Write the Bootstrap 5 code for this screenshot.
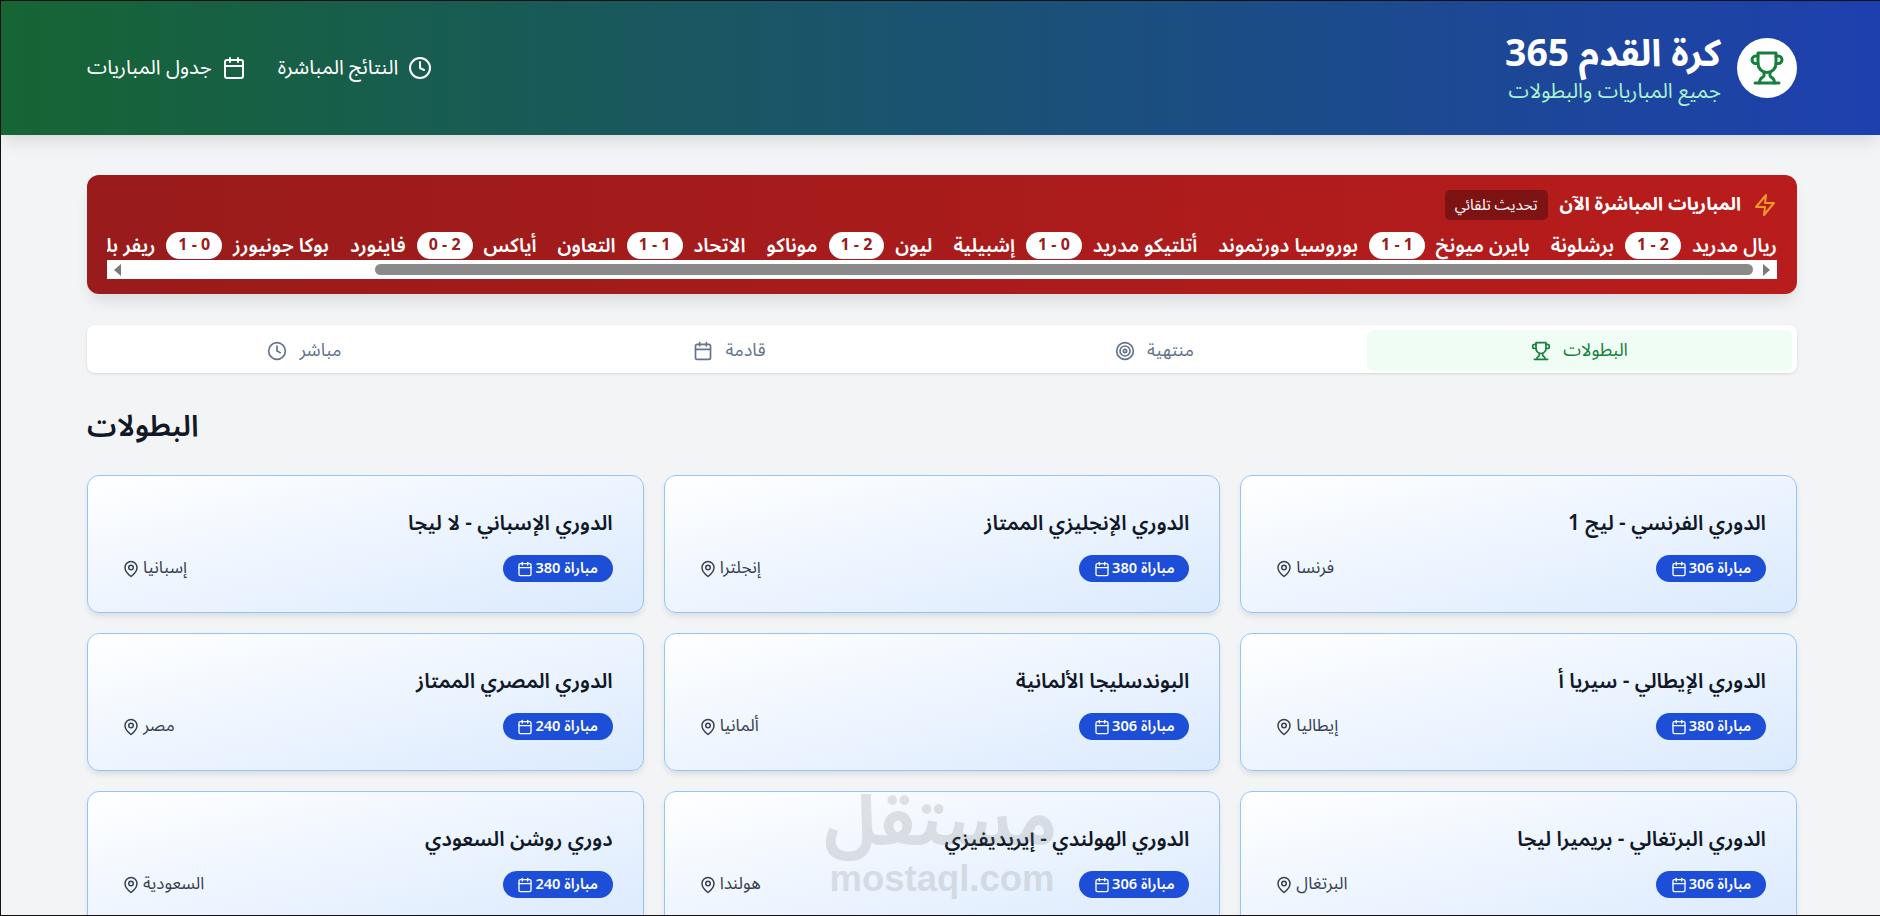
<!DOCTYPE html>
<html lang="ar" dir="rtl">
<head>
<meta charset="utf-8">
<link href="https://cdn.jsdelivr.net/npm/bootstrap@5.3.0/dist/css/bootstrap.min.css" rel="stylesheet">
<style>
html,body{height:100%;overflow:hidden}
body{font-family:"Noto Sans Arabic","Noto Sans","Open Sans","DejaVu Sans",sans-serif;background:#f3f4f6;color:#111827;border:1px solid #111;border-right:0;position:relative}
svg.ic{fill:none;stroke:currentColor;stroke-width:2;stroke-linecap:round;stroke-linejoin:round;flex:none}
.hero{height:134px;background:linear-gradient(to left,#1e40af,#166534);box-shadow:0 10px 15px -3px rgba(0,0,0,.1);padding:0 83px 0 86px;color:#fff}
.logo-disc{width:60px;height:60px;background:#fff;color:#15803d}
.brand-block{padding-top:4px}
.brand-title{font-size:37.3px;line-height:40px;font-weight:700}
.brand-sub{font-size:20.7px;line-height:28px;color:#a7f3d0;margin-top:3px}
.hero-nav{gap:32px}
.hero-link{font-size:20.3px;color:#fff;text-decoration:none;gap:10px}
.page-body{padding:40px 83px 0 86px}
.live-box{height:119px;border-radius:12px;background:linear-gradient(to left,#b91c1c,#991b1b);color:#fff;padding:15px 20px 0;box-shadow:0 10px 15px -3px rgba(0,0,0,.1)}
.live-head{gap:12px}
.live-title{font-size:18.4px;font-weight:700;line-height:30px}
.auto-chip{font-size:15px;background:rgba(0,0,0,.3);border-radius:5px;padding:0 10px;height:30px;line-height:30px}
.ticker{overflow:hidden;white-space:nowrap;margin-top:12px;height:28px;gap:21px}
.match{font-size:19.5px;font-weight:600;gap:11px;flex:none;line-height:27px}
.score{background:#fff;color:#991b1b;font-size:16px;font-weight:700;border-radius:14px;padding:0 12px;height:27px;line-height:27px}
.fake-bar{height:19px;background:#fff;padding:0 7px;gap:8px}
.bar-thumb{height:11px;background:#8a8a8a;border-radius:6px;margin:0 2px 0 246px;flex:1}
.arrow-r,.arrow-l{width:0;height:0;border-top:6px solid transparent;border-bottom:6px solid transparent;flex:none}
.arrow-r{border-left:7px solid #7a7a7a}
.arrow-l{border-right:7px solid #7a7a7a}
.tabs-bar{height:48px;margin-top:31px;background:#fff;border-radius:8px;box-shadow:0 1px 3px rgba(0,0,0,.12);padding:5px 5px 2px;display:grid;grid-template-columns:repeat(4,1fr)}
.tab-item{color:#64748b;font-size:18px;border-radius:6px;gap:12px}
.tab-item.on{background:#f0fdf4;color:#15803d}
.sect-title{font-size:29.5px;font-weight:600;line-height:36px;margin:36px 0 30px;text-align:left}
.league-grid{display:grid;grid-template-columns:repeat(3,1fr);gap:20px}
.league-card{height:138px;border:1px solid #93c5fd;border-radius:12px;background:linear-gradient(to bottom right,#fff,#dbeafe);box-shadow:0 4px 6px -1px rgba(0,0,0,.1);padding:30px 30px 0 29px}
.league-name{font-size:20.7px;font-weight:600;line-height:36px;margin:0 0 13px}
.count-pill{background:#1d4ed8;color:#fff;font-size:14.6px;font-weight:600;border-radius:14px;height:27px;width:110px;justify-content:center;gap:2px}
.place{font-size:17px;color:#374151;gap:3px;padding-left:5px}
.wm{position:absolute;left:826px;top:786px;width:230px;color:#7b7b7b;opacity:.2;text-align:center;pointer-events:none;font-weight:700;line-height:1;font-family:"Noto Sans Arabic","Liberation Sans",sans-serif}
.wm-ar{font-size:70px;line-height:72px;direction:rtl}
.wm-en{font-size:36.5px;line-height:40px;direction:ltr;font-family:"Liberation Sans",sans-serif}
</style>
</head>
<body>
<svg width="0" height="0" class="position-absolute"><defs>
<symbol id="i-trophy" viewBox="0 0 24 24"><path d="M6 9H4.5a2.5 2.5 0 0 1 0-5H6"/><path d="M18 9h1.5a2.5 2.5 0 0 0 0-5H18"/><path d="M4 22h16"/><path d="M10 14.66V17c0 .55-.47.98-.97 1.21C7.85 18.75 7 20.24 7 22"/><path d="M14 14.66V17c0 .55.47.98.97 1.21C16.15 18.75 17 20.24 17 22"/><path d="M18 2H6v7a6 6 0 0 0 12 0V2Z"/></symbol>
<symbol id="i-clock" viewBox="0 0 24 24"><circle cx="12" cy="12" r="10"/><polyline points="12 6 12 12 16 14"/></symbol>
<symbol id="i-cal" viewBox="0 0 24 24"><rect x="3" y="4" width="18" height="18" rx="2"/><line x1="16" y1="2" x2="16" y2="6"/><line x1="8" y1="2" x2="8" y2="6"/><line x1="3" y1="10" x2="21" y2="10"/></symbol>
<symbol id="i-zap" viewBox="0 0 24 24"><polygon points="13 2 3 14 12 14 11 22 21 10 12 10 13 2"/></symbol>
<symbol id="i-target" viewBox="0 0 24 24"><circle cx="12" cy="12" r="10"/><circle cx="12" cy="12" r="6"/><circle cx="12" cy="12" r="2"/></symbol>
<symbol id="i-pin" viewBox="0 0 24 24"><path d="M20 10c0 6-8 12-8 12s-8-6-8-12a8 8 0 0 1 16 0Z"/><circle cx="12" cy="10" r="3"/></symbol>
</defs></svg>

<header class="hero d-flex justify-content-between align-items-center">
  <div class="d-flex align-items-center gap-3">
    <div class="logo-disc rounded-circle d-flex align-items-center justify-content-center"><svg class="ic" width="36" height="36"><use href="#i-trophy"/></svg></div>
    <div class="brand-block">
      <div class="brand-title">كرة القدم 365</div>
      <div class="brand-sub">جميع المباريات والبطولات</div>
    </div>
  </div>
  <nav class="hero-nav d-flex align-items-center">
    <a class="hero-link d-flex align-items-center" href="#"><svg class="ic" width="24" height="24"><use href="#i-clock"/></svg>النتائج المباشرة</a>
    <a class="hero-link d-flex align-items-center" href="#"><svg class="ic" width="24" height="24"><use href="#i-cal"/></svg>جدول المباريات</a>
  </nav>
</header>

<main class="page-body">
  <section class="live-box">
    <div class="live-head d-flex align-items-center">
      <svg class="ic" width="24" height="24" style="color:#f09a2c"><use href="#i-zap"/></svg>
      <span class="live-title">المباريات المباشرة الآن</span>
      <span class="auto-chip">تحديث تلقائي</span>
    </div>
    <div class="ticker d-flex">
      <span class="match d-flex">ريال مدريد<span class="score">2 - 1</span>برشلونة</span>
      <span class="match d-flex">بايرن ميونخ<span class="score">1 - 1</span>بوروسيا دورتموند</span>
      <span class="match d-flex">أتلتيكو مدريد<span class="score">0 - 1</span>إشبيلية</span>
      <span class="match d-flex">ليون<span class="score">2 - 1</span>موناكو</span>
      <span class="match d-flex">الاتحاد<span class="score">1 - 1</span>التعاون</span>
      <span class="match d-flex">أياكس<span class="score">2 - 0</span>فاينورد</span>
      <span class="match d-flex">بوكا جونيورز<span class="score">0 - 1</span>ريفر بليت</span>
      <span class="match d-flex">الأهلي<span class="score">2 - 1</span>الزمالك</span>
    </div>
    <div class="fake-bar d-flex align-items-center">
      <span class="arrow-r"></span><span class="bar-thumb"></span><span class="arrow-l"></span>
    </div>
  </section>

  <div class="tabs-bar">
    <div class="tab-item on d-flex align-items-center justify-content-center">البطولات<svg class="ic" width="20" height="20"><use href="#i-trophy"/></svg></div>
    <div class="tab-item d-flex align-items-center justify-content-center">منتهية<svg class="ic" width="20" height="20"><use href="#i-target"/></svg></div>
    <div class="tab-item d-flex align-items-center justify-content-center">قادمة<svg class="ic" width="20" height="20"><use href="#i-cal"/></svg></div>
    <div class="tab-item d-flex align-items-center justify-content-center">مباشر<svg class="ic" width="20" height="20"><use href="#i-clock"/></svg></div>
  </div>

  <h2 class="sect-title">البطولات</h2>

  <div class="league-grid">
    <article class="league-card"><h3 class="league-name">الدوري الفرنسي - ليج 1</h3><div class="d-flex justify-content-between align-items-center"><span class="count-pill d-flex align-items-center">مباراة 306<svg class="ic" width="16" height="16"><use href="#i-cal"/></svg></span><span class="place d-flex align-items-center">فرنسا<svg class="ic" width="18" height="18"><use href="#i-pin"/></svg></span></div></article>
    <article class="league-card"><h3 class="league-name">الدوري الإنجليزي الممتاز</h3><div class="d-flex justify-content-between align-items-center"><span class="count-pill d-flex align-items-center">مباراة 380<svg class="ic" width="16" height="16"><use href="#i-cal"/></svg></span><span class="place d-flex align-items-center">إنجلترا<svg class="ic" width="18" height="18"><use href="#i-pin"/></svg></span></div></article>
    <article class="league-card"><h3 class="league-name">الدوري الإسباني - لا ليجا</h3><div class="d-flex justify-content-between align-items-center"><span class="count-pill d-flex align-items-center">مباراة 380<svg class="ic" width="16" height="16"><use href="#i-cal"/></svg></span><span class="place d-flex align-items-center">إسبانيا<svg class="ic" width="18" height="18"><use href="#i-pin"/></svg></span></div></article>
    <article class="league-card"><h3 class="league-name">الدوري الإيطالي - سيريا أ</h3><div class="d-flex justify-content-between align-items-center"><span class="count-pill d-flex align-items-center">مباراة 380<svg class="ic" width="16" height="16"><use href="#i-cal"/></svg></span><span class="place d-flex align-items-center">إيطاليا<svg class="ic" width="18" height="18"><use href="#i-pin"/></svg></span></div></article>
    <article class="league-card"><h3 class="league-name">البوندسليجا الألمانية</h3><div class="d-flex justify-content-between align-items-center"><span class="count-pill d-flex align-items-center">مباراة 306<svg class="ic" width="16" height="16"><use href="#i-cal"/></svg></span><span class="place d-flex align-items-center">ألمانيا<svg class="ic" width="18" height="18"><use href="#i-pin"/></svg></span></div></article>
    <article class="league-card"><h3 class="league-name">الدوري المصري الممتاز</h3><div class="d-flex justify-content-between align-items-center"><span class="count-pill d-flex align-items-center">مباراة 240<svg class="ic" width="16" height="16"><use href="#i-cal"/></svg></span><span class="place d-flex align-items-center">مصر<svg class="ic" width="18" height="18"><use href="#i-pin"/></svg></span></div></article>
    <article class="league-card"><h3 class="league-name">الدوري البرتغالي - بريميرا ليجا</h3><div class="d-flex justify-content-between align-items-center"><span class="count-pill d-flex align-items-center">مباراة 306<svg class="ic" width="16" height="16"><use href="#i-cal"/></svg></span><span class="place d-flex align-items-center">البرتغال<svg class="ic" width="18" height="18"><use href="#i-pin"/></svg></span></div></article>
    <article class="league-card"><h3 class="league-name">الدوري الهولندي - إيريديفيزي</h3><div class="d-flex justify-content-between align-items-center"><span class="count-pill d-flex align-items-center">مباراة 306<svg class="ic" width="16" height="16"><use href="#i-cal"/></svg></span><span class="place d-flex align-items-center">هولندا<svg class="ic" width="18" height="18"><use href="#i-pin"/></svg></span></div></article>
    <article class="league-card"><h3 class="league-name">دوري روشن السعودي</h3><div class="d-flex justify-content-between align-items-center"><span class="count-pill d-flex align-items-center">مباراة 240<svg class="ic" width="16" height="16"><use href="#i-cal"/></svg></span><span class="place d-flex align-items-center">السعودية<svg class="ic" width="18" height="18"><use href="#i-pin"/></svg></span></div></article>
  </div>
</main>

<div class="wm"><div class="wm-ar">مستقل</div><div class="wm-en">mostaql.com</div></div>
<script src="https://cdn.jsdelivr.net/npm/bootstrap@5.3.0/dist/js/bootstrap.bundle.min.js"></script>
</body>
</html>
